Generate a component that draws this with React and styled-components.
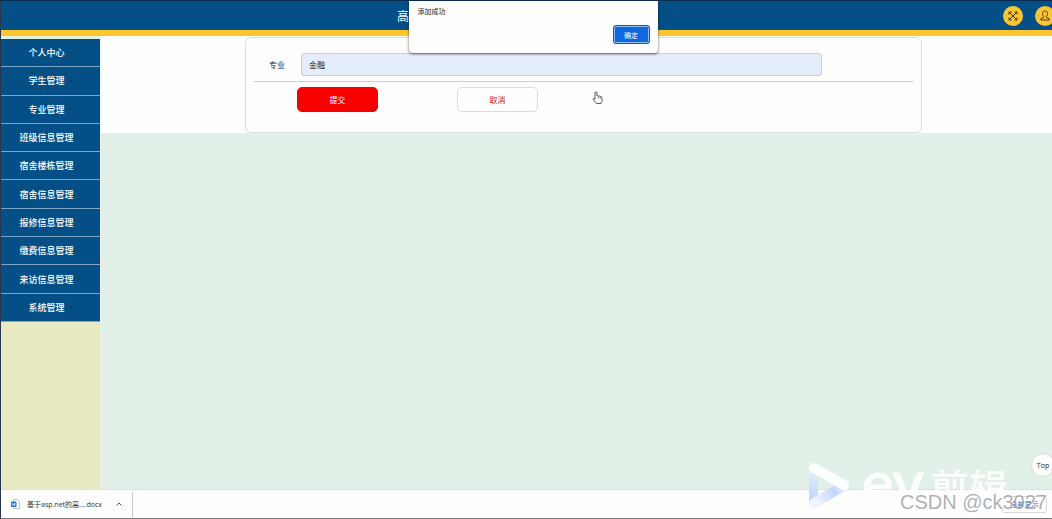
import React from "react";
import styled, { createGlobalStyle } from "styled-components";

const GlobalStyle = createGlobalStyle`
  * {
    box-sizing: border-box;
  }
  body {
    margin: 0;
    font-family: "Open Sans", "Noto Sans CJK SC", sans-serif;
    font-size: 8px;
    color: #222;
  }
  button,
  input {
    font-family: inherit;
  }
`;

const Page = styled.div`
  position: relative;
  display: flex;
  flex-direction: column;
  min-height: 100vh;
  overflow: hidden;
  background: #e3f0e7;
  border: 1px solid #777b80;
  border-top-color: #0b2a50;
  border-left-color: #26384d;
  border-right: none;
`;

const Header = styled.header`
  display: flex;
  align-items: center;
  justify-content: space-between;
  height: 35px;
  padding-left: 396px;
  background: #044f86;
  border-bottom: 6px solid #fdc62f;
`;

const Title = styled.h1`
  margin: 0;
  font-size: 12px;
  font-weight: 400;
  color: #fff;
`;

const HeaderActions = styled.div`
  display: flex;
  gap: 12px;
  margin-right: -3px;
`;

const RoundButton = styled.button`
  display: flex;
  align-items: center;
  justify-content: center;
  width: 20px;
  height: 20px;
  padding: 0;
  border: none;
  border-radius: 50%;
  background: #fac532;
  color: #3d3210;
`;

const Body = styled.div`
  display: flex;
  flex: 1;
`;

const Sidebar = styled.aside`
  width: 100px;
  padding-top: 3px;
  background: linear-gradient(#e4f0e0 3px, #e7eac1 3px);
  border-right: 1px solid #eef1f0;
`;

const Menu = styled.ul`
  display: grid;
  grid-auto-rows: 1fr;
  min-height: 283px;
  margin: 0;
  padding: 0;
  list-style: none;
`;

const MenuItem = styled.li`
  display: flex;
  background: #044f86;
  border-bottom: 1px solid #7fa6c6;
`;

const MenuLink = styled.a`
  display: flex;
  flex: 1;
  align-items: center;
  justify-content: center;
  gap: 4px;
  font-size: 9px;
  font-weight: 500;
  color: #fff;
  text-decoration: none;

  &::after {
    content: "";
    border: 2px solid transparent;
    border-top-color: #0a3c66;
    border-bottom: none;
  }
`;

const Main = styled.main`
  flex: 1;
`;

const Content = styled.div`
  padding: 1px 130px 0 144px;
  background: #fefefe;
`;

const Form = styled.form`
  padding: 15px 8px 20px;
  border: 1px solid #d9dcdc;
  border-radius: 6px;
`;

const Field = styled.div`
  display: flex;
  align-items: center;
  padding: 0 91px 5px 15px;
  border-bottom: 1px solid #cccecf;
`;

const Label = styled.label`
  width: 32px;
`;

const Input = styled.input`
  flex: 1;
  min-width: 0;
  height: 23px;
  padding: 0 7px;
  font-size: 8px;
  color: #222;
  background: #e5edfa;
  border: 1px solid #c9cfdb;
  border-radius: 3px;
`;

const Actions = styled.div`
  display: flex;
  gap: 79px;
  padding: 5px 0 0 43px;
`;

const Button = styled.button`
  width: 81px;
  height: 25px;
  padding: 0;
  font-size: 8px;
  color: ${(props) => (props.$primary ? "#fff" : "#b3191c")};
  background: ${(props) => (props.$primary ? "#f60000" : "#fefefe")};
  border: 1px solid ${(props) => (props.$primary ? "#f60000" : "#d9dbdd")};
  border-radius: 5px;
`;

const Dialog = styled.div`
  position: absolute;
  top: 0;
  left: calc(50% - 118px);
  z-index: 2;
  display: flex;
  flex-direction: column;
  justify-content: space-between;
  width: 249px;
  height: 52px;
  padding: 5px 8px 9px 9px;
  background: #fefefe;
  border-radius: 0 0 4px 4px;
  box-shadow: 0 1px 3px rgba(0, 0, 0, 0.6);
`;

const Message = styled.p`
  margin: 0;
  font-size: 7px;
  line-height: 12px;
`;

const ConfirmButton = styled.button`
  align-self: flex-end;
  width: 37px;
  height: 19px;
  padding: 0;
  font-size: 7px;
  color: #fff;
  background: #1068e0;
  border: 1px solid #1559a8;
  border-radius: 3px;
  box-shadow: inset 0 0 0 1px #8fc0ee;
`;

const Downloads = styled.footer`
  display: flex;
  align-items: center;
  justify-content: space-between;
  height: 29px;
  padding-right: 5px;
  background: #fefefe;
  border-top: 1px solid #dcdfdf;
`;

const FileItem = styled.div`
  display: flex;
  align-items: center;
  width: 132px;
  height: 25px;
  padding: 0 10px;
  border-right: 1px solid #c4c6c8;
`;

const FileLink = styled.a`
  display: flex;
  flex: 1;
  align-items: center;
  gap: 7px;
  font-size: 7px;
  color: #333;
  text-decoration: none;
  white-space: nowrap;
`;

const IconButton = styled.button`
  display: flex;
  padding: 0;
  color: #555;
  background: none;
  border: none;
`;

const ShowAll = styled.button`
  width: 45px;
  height: 17px;
  padding: 0;
  font-size: 7px;
  color: #1c5fae;
  background: #fefefe;
  border: 1px solid #d8dadd;
  border-radius: 2px;
`;

const TopLink = styled.a`
  position: absolute;
  right: -3px;
  bottom: 41px;
  display: flex;
  align-items: center;
  justify-content: center;
  width: 24px;
  height: 24px;
  font-size: 7px;
  color: #222;
  text-decoration: none;
  background: #fefefe;
  border: 1px solid #d5dad7;
  border-radius: 50%;
`;

const Pointer = styled.svg`
  position: absolute;
  top: 90px;
  left: 591px;
`;

const Brand = styled.div`
  position: absolute;
  right: 44px;
  bottom: 0;
  display: flex;
  height: 56px;
  color: #fbfefd;
  pointer-events: none;
`;

const BrandLatin = styled.span`
  margin-left: 12px;
  font-family: Lato, sans-serif;
  font-size: 60px;
  font-weight: 500;
  line-height: 38px;
  -webkit-text-stroke: 1px currentColor;
`;

const BrandName = styled.span`
  margin-left: 6px;
  font-size: 39px;
  font-weight: 500;
  line-height: 52px;
`;

const Credit = styled.span`
  position: absolute;
  right: 5px;
  bottom: 4px;
  font-family: "Liberation Sans", sans-serif;
  font-size: 20px;
  line-height: 24px;
  color: rgba(140, 142, 145, 0.7);
  text-shadow: 1px 1px 0 rgba(255, 255, 255, 0.6);
  pointer-events: none;
`;

const menu = [
  "个人中心",
  "学生管理",
  "专业管理",
  "班级信息管理",
  "宿舍楼栋管理",
  "宿舍信息管理",
  "报修信息管理",
  "缴费信息管理",
  "来访信息管理",
  "系统管理",
];

function ExpandIcon() {
  return (
    <svg width="10" height="10" viewBox="0 0 10 10" fill="none" stroke="currentColor">
      <path d="M1.5 1.5l7 7M8.5 1.5l-7 7" />
      <path d="M1 3.5V1h2.5M6.5 1H9v2.5M9 6.5V9H6.5M3.5 9H1V6.5" />
    </svg>
  );
}

function UserIcon() {
  return (
    <svg width="10" height="11" viewBox="0 0 10 11" fill="none" stroke="currentColor" strokeWidth="0.9">
      <path d="M3.8 6.5C2.8 5.8 2.5 4.8 2.5 3.5C2.5 1.8 3.4 1 5 1S7.5 1.8 7.5 3.5C7.5 4.8 7.2 5.8 6.2 6.5V7.3L9.2 8.8V10H.8V8.8L3.8 7.3Z" />
    </svg>
  );
}

function FileIcon() {
  return (
    <svg width="9" height="10" viewBox="0 0 9 10">
      <path d="M2.5.5h4l2 2v7h-6z" fill="#fff" stroke="#a9b6c8" strokeWidth="0.8" />
      <rect y="2.5" width="5.5" height="5.5" rx="0.6" fill="#2f74d0" />
      <path d="M1.2 4l.8 2.5.8-2 .8 2L4.4 4" fill="none" stroke="#fff" strokeWidth="0.6" />
    </svg>
  );
}

function PlayLogo() {
  return (
    <svg width="42" height="50" viewBox="0 0 42 50">
      <defs>
        <linearGradient id="side" x1="0" y1="0" x2="0" y2="1">
          <stop offset="0" stopColor="#e6effc" />
          <stop offset="1" stopColor="#bcd4fb" />
        </linearGradient>
        <linearGradient id="base" gradientUnits="userSpaceOnUse" x1="4" y1="41" x2="38" y2="22">
          <stop offset="0.15" stopColor="#edf3ff" />
          <stop offset="0.65" stopColor="#c0d6fb" />
          <stop offset="1" stopColor="#f5f9ff" />
        </linearGradient>
      </defs>
      <path d="M1 6h9v34H1z" fill="url(#side)" />
      <path d="M6 41L36 24" stroke="url(#base)" strokeWidth="10" strokeLinecap="round" />
      <path d="M6 6L36 23" stroke="#fbfdff" strokeWidth="10" strokeLinecap="round" />
    </svg>
  );
}

export default function App() {
  return (
    <>
      <GlobalStyle />
      <Page>
        <Header>
          <Title>高</Title>
          <HeaderActions>
            <RoundButton aria-label="全屏">
              <ExpandIcon />
            </RoundButton>
            <RoundButton aria-label="用户">
              <UserIcon />
            </RoundButton>
          </HeaderActions>
        </Header>
        <Body>
          <Sidebar>
            <Menu>
              {menu.map((name) => (
                <MenuItem key={name}>
                  <MenuLink href="#">{name}</MenuLink>
                </MenuItem>
              ))}
            </Menu>
          </Sidebar>
          <Main>
            <Content>
              <Form onSubmit={(e) => e.preventDefault()}>
                <Field>
                  <Label htmlFor="major">专业</Label>
                  <Input id="major" defaultValue="金融" />
                </Field>
                <Actions>
                  <Button $primary type="submit">
                    提交
                  </Button>
                  <Button type="button">取消</Button>
                </Actions>
              </Form>
            </Content>
          </Main>
        </Body>
        <Downloads>
          <FileItem>
            <FileLink href="#">
              <FileIcon />
              基于asp.net的高....docx
            </FileLink>
            <IconButton aria-label="更多">
              <svg width="6" height="4" viewBox="0 0 6 4" fill="none" stroke="currentColor">
                <path d="M.5 3.5L3 1l2.5 2.5" />
              </svg>
            </IconButton>
          </FileItem>
          <ShowAll>全部显示</ShowAll>
        </Downloads>
        <TopLink href="#">Top</TopLink>
        <Dialog role="alertdialog" aria-label="添加成功">
          <Message>添加成功</Message>
          <ConfirmButton>确定</ConfirmButton>
        </Dialog>
        <Pointer width="12" height="14" viewBox="0 0 12 14">
          <path
            d="M3 1.5q1-1 2 0V5q1-.6 1.7.2Q7.8 4.7 8.3 5.600Q9.600 5.200 10 6.400V10L9 12.500H4.500L1 8.200q.5-1.200 2 0z"
            fill="#fff"
            stroke="#333"
            strokeWidth="0.8"
          />
          <path d="M6.700 5.500v2M8.300 6v2" stroke="#333" strokeWidth="0.6" />
        </Pointer>
        <Brand>
          <PlayLogo />
          <BrandLatin>ev</BrandLatin>
          <BrandName>剪辑</BrandName>
        </Brand>
        <Credit>CSDN @ck3027</Credit>
      </Page>
    </>
  );
}
